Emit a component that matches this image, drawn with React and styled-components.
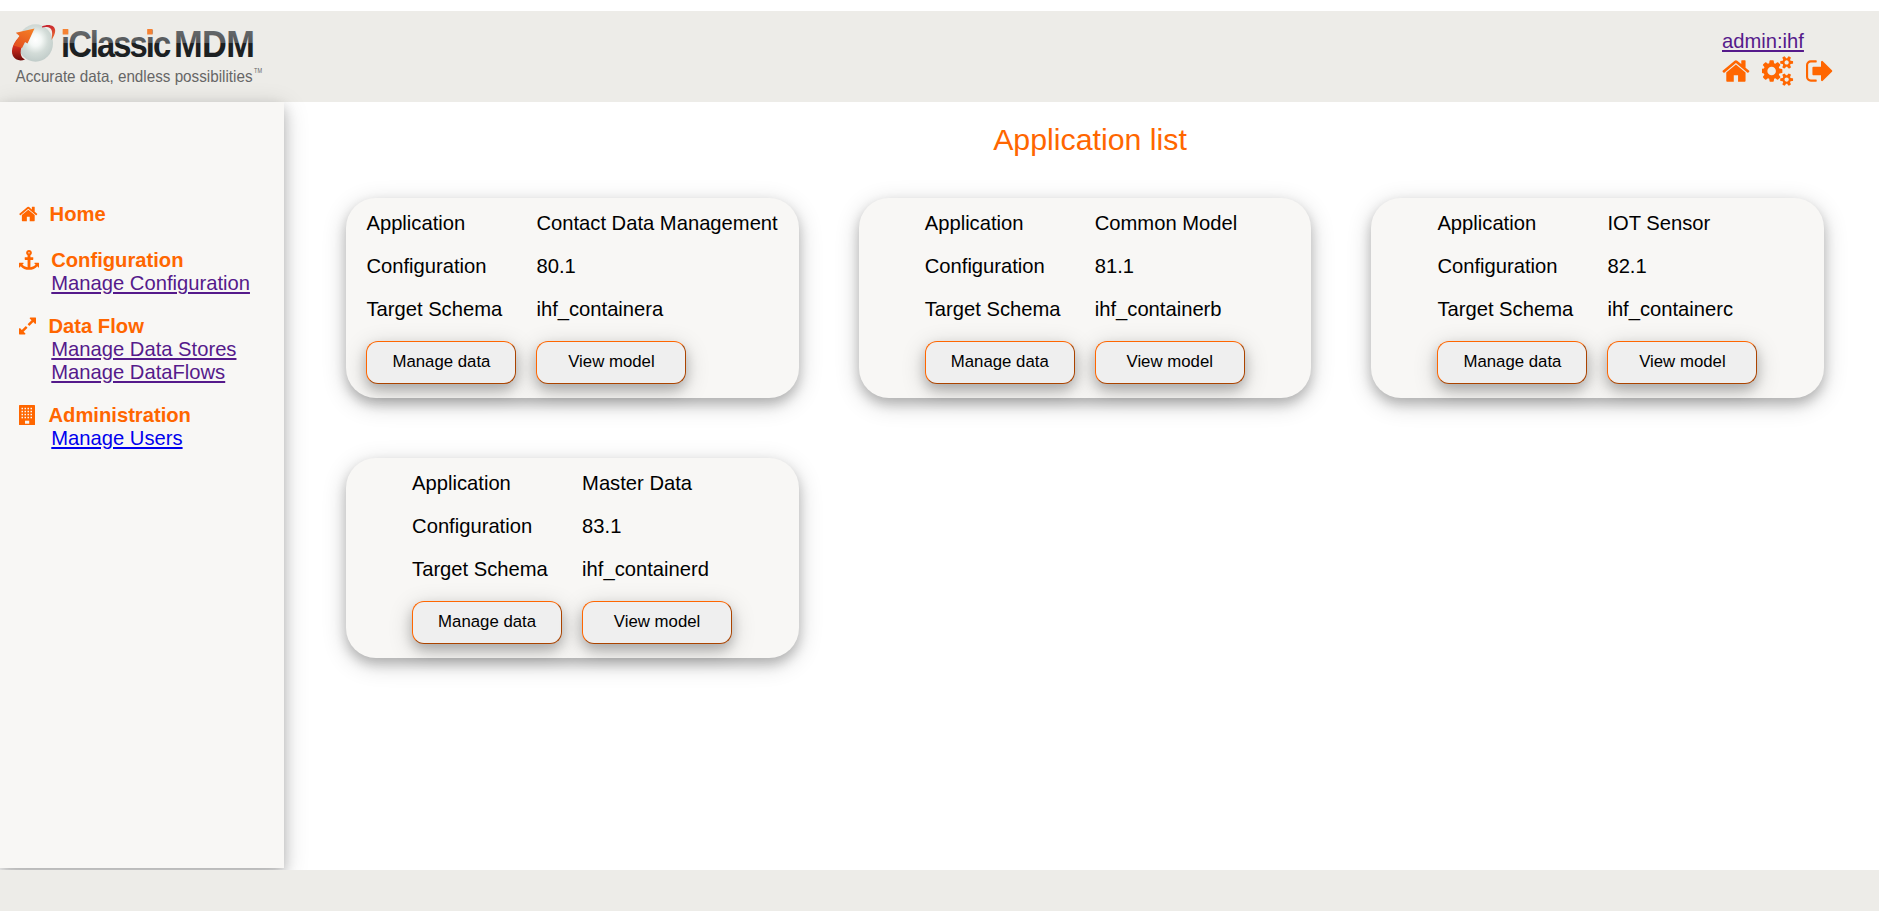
import React from "react";
import styled, { createGlobalStyle } from "styled-components";

const ORANGE = "#ff6600";
const CAST_SHADOW = "0 6px 12px 0 rgba(0, 0, 0, 0.2), 0 6px 24px 0 rgba(0, 0, 0, 0.19)";

const GlobalStyle = createGlobalStyle`
  * { box-sizing: border-box; }
  body {
    margin: 0;
    background: #fff;
    overflow: hidden;
    font-family: "Liberation Sans", Arial, sans-serif;
    font-size: 20.2px;
    line-height: 23px;
    color: #000;
  }
`;

const Page = styled.div`
  display: flex;
  flex-direction: column;
  height: 911px;
  padding-top: 11px;
`;

const Header = styled.header`
  display: flex;
  justify-content: space-between;
  flex: 0 0 91px;
  background: #edece8;
`;

const Body = styled.div`
  display: flex;
  flex: 0 0 768px;
  padding-bottom: 2px;
`;

const Footer = styled.footer`
  flex: 1;
  background: #edece8;
  position: relative;
  z-index: 2;
`;

const Brand = styled.div`
  display: flex;
  padding: 11px 0 0 10px;
`;

const UserArea = styled.div`
  width: 157px;
  padding-top: 19px;
`;

const IconRow = styled.div`
  display: flex;
  gap: 12px;
  margin-top: 2.5px;
`;

const Link = styled.a`
  display: block;
  width: max-content;
  color: ${(p) => (p.$fresh ? "#0000ee" : "#551a8b")};
  text-decoration: underline;
`;

const Glyph = styled.svg`
  display: block;
  flex: none;
  height: ${(p) => p.$size}px;
  width: auto;
  fill: ${ORANGE};
`;

const Sidebar = styled.nav`
  position: relative;
  z-index: 1;
  flex: 0 0 284px;
  padding: 101px 0 0 19px;
  background: #f8f7f5;
  box-shadow: ${CAST_SHADOW};
`;

const MenuGroup = styled.section`
  margin-bottom: ${(p) => p.$space ?? 20}px;
`;

const MenuTitle = styled.div`
  display: flex;
  align-items: center;
  height: 23px;
  color: ${ORANGE};
  font-weight: bold;
`;

const IconSlot = styled.span`
  width: ${(p) => p.$width}px;
  padding-bottom: 1px;
`;

const MenuLinks = styled.div`
  padding-left: 32.3px;
`;

const Main = styled.main`
  flex: 1;
  padding: 0 55px 0 62px;
`;

const Title = styled.h1`
  margin: 0 0 41px;
  padding: 20px 0 0 10px;
  font-size: 30.3px;
  font-weight: normal;
  line-height: 35px;
  text-align: center;
  color: ${ORANGE};
`;

const CardGrid = styled.div`
  display: grid;
  grid-template-columns: repeat(3, 1fr);
  gap: 60px;
`;

const Card = styled.article`
  display: flex;
  justify-content: center;
  height: 200px;
  padding: 4px 0.5px 0 0;
  border-radius: 30px;
  background: #f8f7f5;
  box-shadow: ${CAST_SHADOW};
`;

const Fields = styled.div`
  display: grid;
  grid-template-columns: 150px auto;
  grid-template-rows: 43px 43px 53px 43px;
  column-gap: 20px;
`;

const Field = styled.span`
  padding-top: 10px;
  white-space: nowrap;
`;

const Button = styled.button`
  width: 150px;
  height: 43px;
  padding: 0 0 2px;
  border: 1px outset ${ORANGE};
  border-radius: 12px;
  background: #efefef;
  color: #000;
  font-family: inherit;
  font-size: 16.8px;
  box-shadow: ${CAST_SHADOW};
`;

const ICONS = {
  home: {
    box: "64 0 1664 1792",
    d: "M1472 992v480q0 26-19 45t-45 19h-384v-384h-256v384h-384q-26 0-45-19t-19-45v-480q0-1 .5-3t.5-3l575-474 575 474q1 2 1 6zm223-69l-62 74q-8 9-21 11h-3q-13 0-21-7l-692-577-692 577q-12 8-24 7-13-2-21-11l-62-74q-8-10-7-23.5t11-21.5l719-599q32-26 76-26t76 26l244 204v-195q0-14 9-23t23-9h192q14 0 23 9t9 23v408l219 182q10 8 11 21.5t-7 23.5z",
  },
  cogs: {
    box: "0 0 1920 1792",
    d: "M832 896q0-106-75-181t-181-75-181 75-75 181 75 181 181 75 181-75 75-181zm768 512q0-52-38-90t-90-38-90 38-38 90q0 53 37.5 90.5t90.5 37.5 90.5-37.5 37.5-90.5zm0-1024q0-52-38-90t-90-38-90 38-38 90q0 53 37.5 90.5t90.5 37.5 90.5-37.5 37.5-90.5zm-384 421v185q0 10-7 19.5t-16 10.5l-155 24q-11 35-32 76 34 48 90 115 7 11 7 20 0 12-7 19-23 30-82.5 89.5t-78.5 59.5q-11 0-21-7l-115-90q-37 19-77 31-11 108-23 155-7 24-30 24h-186q-11 0-20-7.5t-10-17.5l-23-153q-34-10-75-31l-118 89q-7 7-20 7-11 0-21-8-144-133-144-160 0-9 7-19 10-14 41-53t47-61q-23-44-35-82l-152-24q-10-1-17-9.5t-7-19.5v-185q0-10 7-19.5t16-10.5l155-24q11-35 32-76-34-48-90-115-7-11-7-20 0-12 7-20 22-30 82-89t79-59q11 0 21 7l115 90q34-18 77-32 11-108 23-154 7-24 30-24h186q11 0 20 7.5t10 17.5l23 153q34 10 75 31l118-89q8-7 20-7 11 0 21 8 144 133 144 160 0 8-7 19-12 16-42 54t-45 60q23 48 34 82l152 23q10 2 17 10.5t7 19.5zm640 533v140q0 16-149 31-12 27-30 52 51 113 51 138 0 4-4 7-122 71-124 71-8 0-46-47t-52-68q-20 2-30 2t-30-2q-14 21-52 68t-46 47q-2 0-124-71-4-3-4-7 0-25 51-138-18-25-30-52-149-15-149-31v-140q0-16 149-31 13-29 30-52-51-113-51-138 0-4 4-7 4-2 35-20t59-34 30-16q8 0 46 46.5t52 67.5q20-2 30-2t30 2q51-71 92-112l6-2q4 0 124 70 4 3 4 7 0 25-51 138 17 23 30 52 149 15 149 31zm0-1024v140q0 16-149 31-12 27-30 52 51 113 51 138 0 4-4 7-122 71-124 71-8 0-46-47t-52-68q-20 2-30 2t-30-2q-14 21-52 68t-46 47q-2 0-124-71-4-3-4-7 0-25 51-138-18-25-30-52-149-15-149-31v-140q0-16 149-31 13-29 30-52-51-113-51-138 0-4 4-7 4-2 35-20t59-34 30-16q8 0 46 46.5t52 67.5q20-2 30-2t30 2q51-71 92-112l6-2q4 0 124 70 4 3 4 7 0 25-51 138 17 23 30 52 149 15 149 31z",
  },
  signOut: {
    box: "64 0 1664 1792",
    d: "M704 1440q0 4 1 20t.5 26.5-3 23.5-10 19.5-20.5 6.5h-320q-119 0-203.5-84.5t-84.5-203.5v-704q0-119 84.5-203.5t203.5-84.5h320q13 0 22.5 9.5t9.5 22.5q0 4 1 20t.5 26.5-3 23.5-10 19.5-20.5 6.5h-320q-66 0-113 47t-47 113v704q0 66 47 113t113 47h312l11.5 1 11.5 3 8 5.5 7 9 2 13.5zm928-544q0 26-19 45l-544 544q-19 19-45 19t-45-19-19-45v-288h-448q-26 0-45-19t-19-45v-384q0-26 19-45t45-19h448v-288q0-26 19-45t45-19 45 19l544 544q19 19 19 45z",
  },
  anchor: {
    box: "0 0 1792 1792",
    d: "M960 256q0-26-19-45t-45-19-45 19-19 45 19 45 45 19 45-19 19-45zm832 928v352q0 22-20 30-8 2-12 2-12 0-23-9l-93-93q-119 143-318.5 226.5t-429.5 83.5-429.5-83.5-318.5-226.5l-93 93q-9 9-23 9-4 0-12-2-20-8-20-30v-352q0-14 9-23t23-9h352q22 0 30 20 8 19-7 35l-100 100q67 91 189.5 153.5t271.5 82.5v-647h-192q-26 0-45-19t-19-45v-128q0-26 19-45t45-19h192v-163q-58-34-93-92.5t-35-128.5q0-106 75-181t181-75 181 75 75 181q0 70-35 128.5t-93 92.5v163h192q26 0 45 19t19 45v128q0 26-19 45t-45 19h-192v647q149-20 271.5-82.5t189.5-153.5l-100-100q-15-16-7-35 8-20 30-20h352q14 0 23 9t9 23z",
  },
  expand: {
    box: "128 0 1536 1792",
    d: "M883 1056q0 13-10 23l-332 332 144 144q19 19 19 45t-19 45-45 19h-448q-26 0-45-19t-19-45v-448q0-26 19-45t45-19 45 19l144 144 332-332q10-10 23-10t23 10l114 114q10 10 10 23zm781-864v448q0 26-19 45t-45 19-45-19l-144-144-332 332q-10 10-23 10t-23-10l-114-114q-10-10-10-23t10-23l332-332-144-144q-19-19-19-45t19-45 45-19h448q26 0 45 19t19 45z",
  },
};

function Icon({ name, size }) {
  const icon = ICONS[name];
  return (
    <Glyph $size={size} viewBox={icon.box} aria-hidden="true">
      <path d={icon.d} />
    </Glyph>
  );
}

function BuildingIcon({ size }) {
  const rows = [3, 6, 9, 12];
  const cols = [3, 6, 9, 12];
  return (
    <Glyph $size={size} viewBox="0 0 16 20" aria-hidden="true">
      <rect width="16" height="20" rx="0.5" />
      {rows.map((y) =>
        cols.map((x) => <rect key={`${x}-${y}`} x={x - 0.5} y={y - 0.2} width="1.5" height="1.5" fill="#f8f7f5" />)
      )}
      <rect x="6" y="15.7" width="4.2" height="3" fill="#f8f7f5" />
    </Glyph>
  );
}

function Logo() {
  return (
    <svg width="262" height="72" viewBox="10 22 262 72" role="img" aria-label="iClassic MDM">
      <defs>
        <radialGradient id="ball" cx="0.5" cy="0.42" r="0.55">
          <stop offset="0" stopColor="#ffffff" />
          <stop offset="0.3" stopColor="#f4f8f6" />
          <stop offset="0.65" stopColor="#d3dcd8" />
          <stop offset="1" stopColor="#c3cecb" />
        </radialGradient>
        <linearGradient id="shaft" x1="0.5" y1="0" x2="0.5" y2="1">
          <stop offset="0" stopColor="#e8561f" />
          <stop offset="0.5" stopColor="#cf2b1c" />
          <stop offset="1" stopColor="#6e0c0a" />
        </linearGradient>
        <linearGradient id="head" x1="0.9" y1="0" x2="0.4" y2="1">
          <stop offset="0" stopColor="#f58025" />
          <stop offset="1" stopColor="#e4521f" />
        </linearGradient>
        <linearGradient id="ring" x1="0" y1="0" x2="1" y2="1">
          <stop offset="0" stopColor="#c5202f" />
          <stop offset="0.5" stopColor="#cf3330" />
          <stop offset="1" stopColor="#f58233" />
        </linearGradient>
        <linearGradient id="ink" gradientUnits="userSpaceOnUse" x1="0" y1="-27.5" x2="0" y2="0">
          <stop offset="0" stopColor="#66696b" />
          <stop offset="0.49" stopColor="#54575a" />
          <stop offset="0.51" stopColor="#1c2022" />
          <stop offset="1" stopColor="#1c2022" />
        </linearGradient>
      </defs>
      <ellipse cx="35.5" cy="43" rx="17.5" ry="18.8" fill="url(#ball)" />
      <path d="M42 26.5C48 23.5 55.5 25 55.2 31C55 34 53.5 37 51.5 40C52 35.5 53 31 50.5 28.5C48.5 26.8 45 26.6 42 27.5Z" fill="url(#ring)" />
      <path d="M21 35C14 41 10 50 13 56C15 60 20 61.5 25 59.5C20.5 57.5 19.5 52 22 46L27 38Z" fill="url(#shaft)" />
      <path d="M34.5 28.5L15.8 32.7L19.5 36L13.5 45.5L22 48L25 42L27.5 43.5Z" fill="url(#head)" />
      <g fontFamily="Liberation Sans, Arial, sans-serif">
        <g fontSize="37" fontWeight="bold" fill="url(#ink)">
          <text transform="translate(61 57) scale(0.885 1)" letterSpacing="-2.2">iClassic</text>
          <text transform="translate(174 57) scale(0.93 1)" letterSpacing="-0.7">MDM</text>
        </g>
        <g fill="#666666">
          <text x="15.5" y="81.7" fontSize="16.5" textLength="237" lengthAdjust="spacingAndGlyphs">Accurate data, endless possibilities</text>
          <text x="254" y="72.5" fontSize="7" textLength="8" lengthAdjust="spacingAndGlyphs">TM</text>
        </g>
      </g>
      <rect x="62.7" y="29" width="5.6" height="5.5" fill="#f58233" />
      <rect x="147.2" y="29" width="5.4" height="5.5" fill="#f58233" />
    </svg>
  );
}

const MENU = [
  { title: "Home", icon: "home", slot: 30.6, space: 23, links: [] },
  { title: "Configuration", icon: "anchor", slot: 32.2, links: [{ text: "Manage Configuration" }] },
  { title: "Data Flow", icon: "expand", slot: 29.5, links: [{ text: "Manage Data Stores" }, { text: "Manage DataFlows" }] },
  { title: "Administration", icon: "building", slot: 29.5, links: [{ text: "Manage Users", fresh: true }] },
];

const APPLICATIONS = [
  { name: "Contact Data Management", configuration: "80.1", schema: "ihf_containera" },
  { name: "Common Model", configuration: "81.1", schema: "ihf_containerb" },
  { name: "IOT Sensor", configuration: "82.1", schema: "ihf_containerc" },
  { name: "Master Data", configuration: "83.1", schema: "ihf_containerd" },
];

function ApplicationCard({ app }) {
  return (
    <Card>
      <Fields>
        <Field>Application</Field>
        <Field>{app.name}</Field>
        <Field>Configuration</Field>
        <Field>{app.configuration}</Field>
        <Field>Target Schema</Field>
        <Field>{app.schema}</Field>
        <Button>Manage data</Button>
        <Button>View model</Button>
      </Fields>
    </Card>
  );
}

export default function App() {
  return (
    <Page>
      <GlobalStyle />
      <Header>
        <Brand>
          <Logo />
        </Brand>
        <UserArea>
          <Link href="#user">admin:ihf</Link>
          <IconRow>
            <Icon name="home" size={30} />
            <Icon name="cogs" size={30} />
            <Icon name="signOut" size={30} />
          </IconRow>
        </UserArea>
      </Header>
      <Body>
        <Sidebar>
          {MENU.map((group) => (
            <MenuGroup key={group.title} $space={group.space}>
              <MenuTitle>
                <IconSlot $width={group.slot}>
                  {group.icon === "building" ? <BuildingIcon size={20} /> : <Icon name={group.icon} size={20} />}
                </IconSlot>
                {group.title}
              </MenuTitle>
              <MenuLinks>
                {group.links.map((link) => (
                  <Link key={link.text} href="#menu" $fresh={link.fresh}>
                    {link.text}
                  </Link>
                ))}
              </MenuLinks>
            </MenuGroup>
          ))}
        </Sidebar>
        <Main>
          <Title>Application list</Title>
          <CardGrid>
            {APPLICATIONS.map((app) => (
              <ApplicationCard key={app.name} app={app} />
            ))}
          </CardGrid>
        </Main>
      </Body>
      <Footer />
    </Page>
  );
}
